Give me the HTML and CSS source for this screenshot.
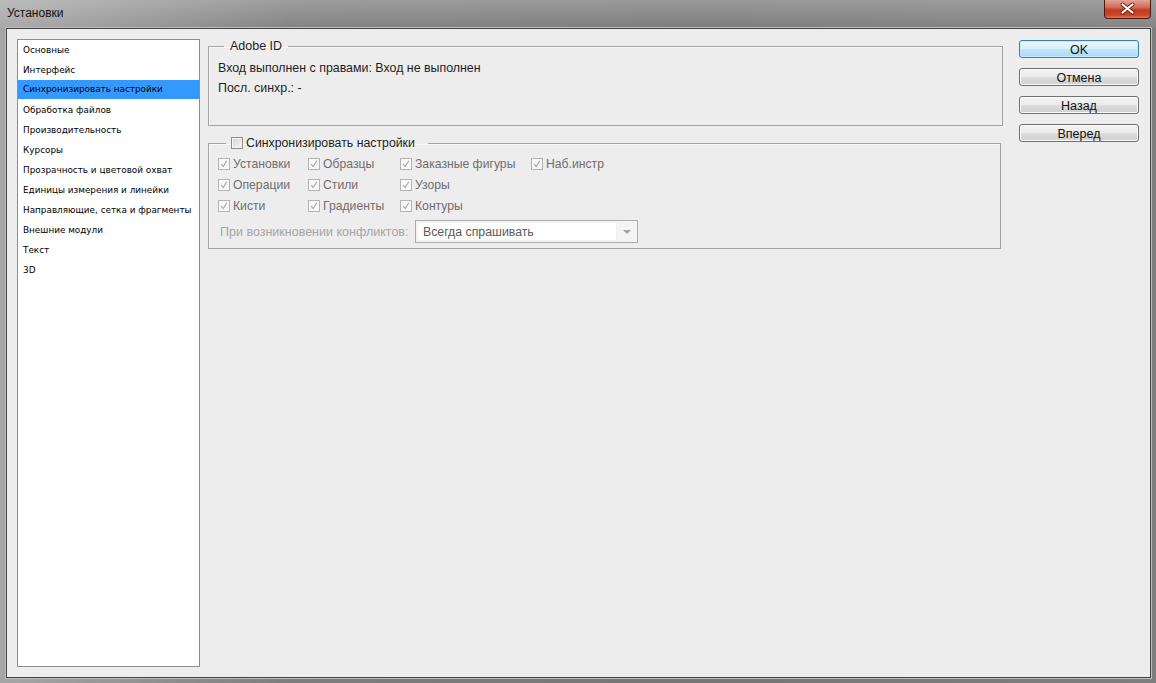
FILE: index.html
```html
<!DOCTYPE html>
<html lang="ru">
<head>
	<meta charset="utf-8"/>
	<title>Установки</title>
	<link rel="stylesheet" href="styles.css">
</head>
<body>

<div class="window">
	<!--заголовок окна-->
	<div class="titlebar">
		<span class="titlebar__text">Установки</span>
		<a class="titlebar__close" href="javascript:void(0);">
			<svg width="47" height="19" viewBox="0 0 47 19">
				<path d="M18.5 5.5 L28.5 13.5 M28.5 5.5 L18.5 13.5" stroke="#6b2116" stroke-width="4" stroke-linecap="round"/>
				<path d="M18.5 5.5 L28.5 13.5 M28.5 5.5 L18.5 13.5" stroke="#ffffff" stroke-width="2.2" stroke-linecap="round"/>
			</svg>
		</a>
	</div>

	<div class="client">
		<!--список разделов-->
		<ul class="nav">
			<li class="nav__item">Основные</li>
			<li class="nav__item">Интерфейс</li>
			<li class="nav__item nav__item_active">Синхронизировать настройки</li>
			<li class="nav__item">Обработка файлов</li>
			<li class="nav__item">Производительность</li>
			<li class="nav__item">Курсоры</li>
			<li class="nav__item">Прозрачность и цветовой охват</li>
			<li class="nav__item">Единицы измерения и линейки</li>
			<li class="nav__item">Направляющие, сетка и фрагменты</li>
			<li class="nav__item">Внешние модули</li>
			<li class="nav__item">Текст</li>
			<li class="nav__item">3D</li>
		</ul>

		<div class="main">
			<fieldset class="group group_adobe">
				<legend class="group__legend">Adobe ID</legend>
				<p class="group__line">Вход выполнен с правами: Вход не выполнен</p>
				<p class="group__line">Посл. синхр.: -</p>
			</fieldset>

			<fieldset class="group group_sync">
				<legend class="group__legend group__legend_check">
					<span class="cb cb_main"></span>Синхронизировать настройки
				</legend>
				<div class="opts">
					<label class="opt"><span class="cb cb_on"></span>Установки</label>
					<label class="opt"><span class="cb cb_on"></span>Образцы</label>
					<label class="opt"><span class="cb cb_on"></span>Заказные фигуры</label>
					<label class="opt"><span class="cb cb_on"></span>Наб.инстр</label>
					<label class="opt"><span class="cb cb_on"></span>Операции</label>
					<label class="opt"><span class="cb cb_on"></span>Стили</label>
					<label class="opt"><span class="cb cb_on"></span>Узоры</label>
					<span></span>
					<label class="opt"><span class="cb cb_on"></span>Кисти</label>
					<label class="opt"><span class="cb cb_on"></span>Градиенты</label>
					<label class="opt"><span class="cb cb_on"></span>Контуры</label>
					<span></span>
				</div>
				<div class="conflict">
					<span class="conflict__label">При возникновении конфликтов:</span>
					<div class="select">
						<span class="select__value">Всегда спрашивать</span>
						<span class="select__arrow"></span>
					</div>
				</div>
			</fieldset>
		</div>

		<div class="buttons">
			<a class="btn btn_default" href="javascript:void(0);">OK</a>
			<a class="btn" href="javascript:void(0);">Отмена</a>
			<a class="btn" href="javascript:void(0);">Назад</a>
			<a class="btn" href="javascript:void(0);">Вперед</a>
		</div>
	</div>
</div>

</body>
</html>
```

FILE: styles.css
```css
/*окно настроек*/
html,body{
	margin: 0;
	padding: 0;
}
body{
	font-family: "Liberation Sans", "DejaVu Sans", sans-serif;
	font-size: 12px;
	color: #1e1e1e;
}
.window{
	box-sizing: border-box;
	width: 1156px;
	height: 683px;
	padding: 0 5px 5px 6px;
	display: flex;
	flex-direction: column;
	background: linear-gradient(to right, #a6a6a6 0%, #7d7d7d 25%, #767676 60%, #7e7e7e 100%);
}
.titlebar{
	height: 28px;
	display: flex;
	justify-content: space-between;
	align-items: flex-start;
	background: linear-gradient(to bottom, rgba(255,255,255,0.25), rgba(255,255,255,0.05));
	margin: 0 -5px 0 -6px;
	padding: 0 5px 0 6px;
}
.titlebar__text{
	padding: 6px 0 0 1px;
	font-size: 12px;
	line-height: 15px;
	color: #111;
}
.titlebar__close{
	display: block;
	width: 47px;
	height: 19px;
	box-sizing: border-box;
	border: 1px solid #4d1a12;
	border-top: 0;
	border-radius: 0 0 4px 4px;
	background: linear-gradient(to bottom, #e2a396 0%, #d06e5a 40%, #bf3c22 55%, #c9472a 85%, #de7d5e 100%);
	overflow: hidden;
}
.titlebar__close svg{
	display: block;
	margin: -1px 0 0 -1px;
}

.client{
	flex: 1;
	display: flex;
	align-items: flex-start;
	padding: 10px 11px 10px 10px;
	border: 1px solid #444;
	box-shadow: 0 0 0 1px #bdbdbd;
	background: #ededed;
}

/*список разделов*/
.nav{
	box-sizing: border-box;
	width: 183px;
	height: 628px;
	margin: 0;
	padding: 0;
	list-style: none;
	background: #fff;
	border: 1px solid #8e8e8e;
	font-family: "DejaVu Sans", sans-serif;
	font-size: 8.85px;
	color: #000;
}
.nav__item{
	height: 20px;
	line-height: 20px;
	padding-left: 5px;
	white-space: nowrap;
}
.nav__item_active{
	background: #3399ff;
	height: 19px;
	line-height: 19px;
	margin-bottom: 1px;
}

/*группы*/
.main{
	width: 795px;
	margin-left: 8px;
}
.group{
	margin: 0;
	padding: 0 9px;
	border: 1px solid #a3a3a3;
	box-shadow: inset 1px 1px 0 #fafafa;
}
.group_adobe{
	padding-bottom: 27px;
}
.group_sync{
	margin: 10px 2px 0 0;
	padding-bottom: 5px;
}
.group__legend{
	margin-left: 6px;
	padding: 0 6px;
	line-height: 14px;
	font-size: 12.5px;
	color: #1e1e1e;
}
.group__legend_check{
	margin-left: 8px;
	padding: 0 13px 0 5px;
	display: flex;
	align-items: center;
	font-size: 12.3px;
}
.group__line{
	margin: 0;
	line-height: 20px;
	font-size: 12.4px;
}
.group__line:first-of-type{
	margin-top: 5px;
}

/*флажки*/
.cb{
	display: inline-block;
	box-sizing: border-box;
	width: 12px;
	height: 12px;
	margin-right: 3px;
	border: 1px solid #b4b4b4;
	background: linear-gradient(to bottom, #f0f0f0, #fcfcfc);
	flex: none;
}
.cb_main{
	border-color: #8f8f8f;
	background: linear-gradient(135deg, #d3d3d3, #f6f6f6);
	box-shadow: inset 0 0 0 1px #f4f4f4;
}
.cb_on{
	background: #f8f8f8 url("data:image/svg+xml,%3Csvg xmlns='http://www.w3.org/2000/svg' width='10' height='10'%3E%3Cpath d='M2.2 5.2 L4.2 7.6 L7.8 1.8' fill='none' stroke='%23a9a9a9' stroke-width='1.2'/%3E%3C/svg%3E") center no-repeat;
}
.opts{
	margin-top: 3px;
	display: grid;
	grid-template-columns: 90px 92px 131px auto;
	grid-auto-rows: 21px;
}
.opt{
	display: flex;
	align-items: center;
	white-space: nowrap;
	font-size: 12.2px;
	color: #6f6f6f;
}

/*выпадающий список*/
.conflict{
	margin-top: 4px;
	display: flex;
	align-items: center;
}
.conflict__label{
	width: 195px;
	padding-left: 2px;
	font-size: 12.5px;
	color: #a5a5a5;
	white-space: nowrap;
}
.select{
	box-sizing: border-box;
	width: 223px;
	height: 23px;
	display: flex;
	border: 1px solid #acacac;
	background: #f4f4f4;
	padding: 1px;
}
.select__value{
	flex: 1;
	padding-left: 5px;
	line-height: 19px;
	background: #fff;
	border: 1px solid #f0f0f0;
	font-size: 12.3px;
	color: #5a5a5a;
}
.select__arrow{
	width: 19px;
	position: relative;
}
.select__arrow:after{
	content: '';
	position: absolute;
	left: 6px;
	top: 8px;
	border: 4px solid transparent;
	border-top: 4px solid #a3a3a3;
	border-bottom: 0;
}

/*кнопки*/
.buttons{
	width: 120px;
	margin-left: 16px;
	padding-top: 1px;
	display: flex;
	flex-direction: column;
	gap: 10px;
}
.btn{
	box-sizing: border-box;
	display: block;
	height: 18px;
	padding-top: 1px;
	line-height: 16px;
	text-align: center;
	text-decoration: none;
	font-size: 12.5px;
	color: #111;
	border: 1px solid #707070;
	border-radius: 3px;
	background: linear-gradient(to bottom, #f3f3f3 0%, #ebebeb 48%, #dddddd 52%, #d0d0d0 100%);
	box-shadow: inset 0 0 0 1px #fbfbfb;
	overflow: hidden;
}
.btn_default{
	border-color: #3c7fb1;
	background: linear-gradient(to bottom, #eaf6fd 0%, #d9f0fc 48%, #bee6fd 52%, #a7d9f5 100%);
	box-shadow: inset 0 0 0 1px #c6ecfc;
}
```
